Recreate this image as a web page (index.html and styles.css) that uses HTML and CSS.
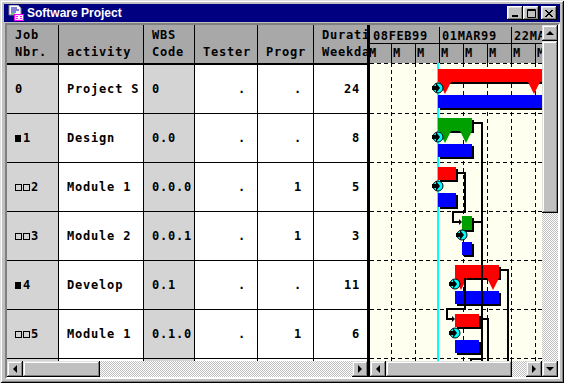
FILE: index.html
```html
<!doctype html>
<html lang="en">
<head>
  <title>Software Project</title>
  <link rel="stylesheet" href="styles.css">
</head>
<body>
  <div class="window">
    <div class="titlebar">
      <svg class="app-icon" width="16" height="16" viewBox="0 0 16 16">
        <path d="M1 0h9l3 3v7H1z" fill="#fff" stroke="#808080"/>
        <path d="M3 3h6M3 5h8M3 7h5" stroke="#0000a8"/>
        <path d="M3 9h4" stroke="#00a800"/>
        <rect x="6" y="9" width="10" height="7" fill="#ff00ff"/>
        <path d="M7.5 10.5h3v4h-3zM11.5 10.5h3v4h-3zM7 12.5h8" stroke="#fff" fill="none"/>
      </svg>
      <span class="title">Software Project</span>
      <div class="controls">
        <span class="ctl"><svg width="8" height="7" viewBox="0 0 8 7"><rect x="1" y="5" width="6" height="2" fill="#000"/></svg></span>
        <span class="ctl"><svg width="9" height="9" viewBox="0 0 9 9"><path d="M0.5 0.5h8v8h-8z M0.5 1.5h8" fill="none" stroke="#000"/></svg></span>
        <span class="ctl close"><svg width="8" height="7" viewBox="0 0 8 7"><path d="M0 0l7 7M1 0l7 7M7 0l-7 7M8 0l-7 7" stroke="#000" stroke-width="1"/></svg></span>
      </div>
    </div>

    <div class="client">
      <div class="table-pane">
        <div class="grid">
          <div class="hd">Job<br>Nbr.</div>
          <div class="hd">activity</div>
          <div class="hd">WBS<br>Code</div>
          <div class="hd">Tester</div>
          <div class="hd">Progr</div>
          <div class="hd">Durati<br>Weekda</div>

          <div class="cell key">0</div>
          <div class="cell">Project S</div>
          <div class="cell key">0</div>
          <div class="cell num">.</div>
          <div class="cell num">.</div>
          <div class="cell num dur">24</div>

          <div class="cell key"><i class="sq full"></i>1</div>
          <div class="cell">Design</div>
          <div class="cell key">0.0</div>
          <div class="cell num">.</div>
          <div class="cell num">.</div>
          <div class="cell num dur">8</div>

          <div class="cell key"><i class="sq"></i><i class="sq"></i>2</div>
          <div class="cell">Module 1</div>
          <div class="cell key">0.0.0</div>
          <div class="cell num">.</div>
          <div class="cell num">1</div>
          <div class="cell num dur">5</div>

          <div class="cell key"><i class="sq"></i><i class="sq"></i>3</div>
          <div class="cell">Module 2</div>
          <div class="cell key">0.0.1</div>
          <div class="cell num">.</div>
          <div class="cell num">1</div>
          <div class="cell num dur">3</div>

          <div class="cell key"><i class="sq full"></i>4</div>
          <div class="cell">Develop</div>
          <div class="cell key">0.1</div>
          <div class="cell num">.</div>
          <div class="cell num">.</div>
          <div class="cell num dur">11</div>

          <div class="cell key"><i class="sq"></i><i class="sq"></i>5</div>
          <div class="cell">Module 1</div>
          <div class="cell key">0.1.0</div>
          <div class="cell num">.</div>
          <div class="cell num">1</div>
          <div class="cell num dur">6</div>

          <div class="cell key"></div>
          <div class="cell"></div>
          <div class="cell key"></div>
          <div class="cell num"></div>
          <div class="cell num"></div>
          <div class="cell num dur"></div>
        </div>
        <div class="hscroll">
          <span class="btn"><i class="arr-l"></i></span>
          <span class="thumb thumb-table"></span>
          <span class="track"></span>
          <span class="btn"><i class="arr-r"></i></span>
        </div>
      </div>

      <div class="splitter"></div>

      <div class="gantt-pane">
        <div class="timescale">
          <div class="months">
            <span>08FEB99</span><span>01MAR99</span><span>22MAR99</span>
          </div>
          <div class="weeks">
            <span>M</span><span>M</span><span>M</span><span>M</span><span>M</span><span>M</span><span>M</span><span>M</span>
          </div>
        </div>
        <svg class="chart" width="172" height="298" viewBox="0 0 172 298">
          <rect width="172" height="298" fill="#fffff0"/>
          <g stroke="#000" stroke-dasharray="4 3">
            <path d="M0 0.5H172M0 50.5H172M0 99.5H172M0 148.5H172M0 197.5H172M0 246.5H172M0 295.5H172"/>
            <path d="M21.5 0V298M45.5 0V298M93.5 0V298M117.5 0V298M141.5 0V298M165.5 0V298"/>
          </g>
          <rect x="67" y="0" width="2" height="298" fill="#00ffff"/>

          <g fill="#000">
            <rect x="70" y="8" width="104" height="13"/>
            <rect x="70" y="34" width="104" height="13"/>
            <rect x="70" y="57" width="34" height="13"/>
            <rect x="70" y="83" width="34" height="13"/>
            <rect x="70" y="106" width="18" height="13"/>
            <rect x="70" y="132" width="18" height="14"/>
            <rect x="94" y="155" width="10" height="14"/>
            <rect x="94" y="181" width="10" height="13"/>
            <rect x="87" y="204" width="44" height="13"/>
            <rect x="87" y="230" width="44" height="13"/>
            <rect x="87" y="253" width="24" height="13"/>
            <rect x="87" y="279" width="24" height="13"/>
          </g>
          <g fill="#ff0000">
            <rect x="68" y="6" width="104" height="13"/>
            <rect x="68" y="104" width="18" height="13"/>
            <rect x="85" y="202" width="44" height="13"/>
            <rect x="85" y="251" width="24" height="13"/>
            <path d="M69 19h12l-6 12zM158 19h12l-6 12zM85 215h12l-6 12zM117 215h12l-6 12z"/>
          </g>
          <g fill="#00a000">
            <rect x="68" y="55" width="34" height="13"/>
            <rect x="92" y="153" width="10" height="14"/>
            <path d="M69 68h12l-6 12zM90 68h12l-6 12z"/>
          </g>
          <g fill="#0000ff">
            <rect x="68" y="32" width="104" height="13"/>
            <rect x="68" y="81" width="34" height="13"/>
            <rect x="68" y="130" width="18" height="14"/>
            <rect x="92" y="179" width="10" height="13"/>
            <rect x="85" y="228" width="44" height="13"/>
            <rect x="85" y="277" width="24" height="13"/>
          </g>

          <g fill="none" stroke="#000" stroke-width="2">
            <path d="M103 60H112V298"/>
            <path d="M86 110H95V149H83V159H90"/>
            <path d="M103 159H112"/>
            <path d="M129 207H138V298"/>
            <path d="M95 215V246H77V256H83"/>
            <path d="M109 256H118V298"/>
            <path d="M101 298V296H112"/>
          </g>
          <g fill="#000">
            <path d="M89 156l3 3-3 3z"/>
            <path d="M82 253l3 3-3 3z"/>
          </g>

          <g class="marker">
            <circle cx="68" cy="25" r="5"/><path d="M62 23h4v-3l4 5-4 5v-3h-4z"/>
            <circle cx="68" cy="74" r="5"/><path d="M62 72h4v-3l4 5-4 5v-3h-4z"/>
            <circle cx="68" cy="123" r="5"/><path d="M62 121h4v-3l4 5-4 5v-3h-4z"/>
            <circle cx="92" cy="172" r="5"/><path d="M86 170h4v-3l4 5-4 5v-3h-4z"/>
            <circle cx="85" cy="221" r="5"/><path d="M79 219h4v-3l4 5-4 5v-3h-4z"/>
            <circle cx="85" cy="270" r="5"/><path d="M79 268h4v-3l4 5-4 5v-3h-4z"/>
          </g>
        </svg>
        <div class="hscroll">
          <span class="btn"><i class="arr-l"></i></span>
          <span class="thumb thumb-gantt"></span>
          <span class="track"></span>
          <span class="btn"><i class="arr-r"></i></span>
        </div>
      </div>

      <div class="vscroll">
        <span class="btn"><i class="arr-u"></i></span>
        <span class="thumb thumb-v"></span>
        <span class="track"></span>
        <span class="btn"><i class="arr-d"></i></span>
      </div>
    </div>
  </div>
</body>
</html>
```

FILE: styles.css
```css
body {
  margin: 0;
  background: #c0c0c0;
  font-family: "DejaVu Sans Mono", "Liberation Mono", monospace;
}

.window {
  width: 564px;
  height: 383px;
  box-sizing: border-box;
  padding: 4px 4px 4px 4px;
  background: #c0c0c0;
  box-shadow: inset 1px 1px #dfdfdf, inset -1px -1px #000, inset 2px 2px #fff, inset -2px -2px #808080;
  display: flex;
  flex-direction: column;
}

/* title bar */
.titlebar {
  height: 18px;
  background: #000080;
  display: flex;
  align-items: center;
  padding: 0 3px 0 4px;
}

.app-icon {
  flex: none;
}

.title {
  flex: 1;
  margin-left: 3px;
  color: #fff;
  font: bold 12px "Liberation Sans", Arial, sans-serif;
}

.controls {
  display: flex;
}

.ctl {
  width: 16px;
  height: 14px;
  box-sizing: border-box;
  background: #c0c0c0;
  box-shadow: inset -1px -1px #000, inset 1px 1px #fff, inset -2px -2px #808080, inset 2px 2px #dfdfdf;
  display: flex;
  align-items: center;
  justify-content: center;
}

.ctl.close {
  margin-left: 2px;
}

/* client area */
.client {
  margin: 1px 0 0 1px;
  flex: 1;
  display: flex;
  border: 2px solid;
  border-color: #808080 #fff #fff #808080;
}

.table-pane {
  width: 361px;
  display: flex;
  flex-direction: column;
}

.grid {
  height: 336px;
  overflow: hidden;
  display: grid;
  grid-template-columns: 52px 85px 51px 63px 56px 54px;
  grid-template-rows: 40px;
  grid-auto-rows: 49px;
  background: #fff;
  font-size: 12px;
  font-weight: bold;
  letter-spacing: 0.8px;
}

.hd,
.cell {
  box-sizing: border-box;
  border-right: 1px solid #000;
  border-bottom: 1px solid #000;
  overflow: hidden;
  white-space: nowrap;
}

.hd {
  background: #a8a8a8;
  border-bottom-width: 2px;
  line-height: 17px;
  padding: 3px 0 0 8px;
  display: flex;
  flex-direction: column;
  justify-content: flex-end;
  padding-bottom: 2px;
}

.cell {
  display: flex;
  align-items: center;
  padding-left: 8px;
}

.cell.key {
  background: #d4d4d4;
}

.cell.num {
  justify-content: flex-end;
  padding-right: 11px;
}

.cell.dur {
  padding-right: 7px;
}

.sq {
  display: inline-block;
  width: 7px;
  height: 7px;
  box-sizing: border-box;
  border: 1px solid #000;
  margin-right: 1px;
  margin-top: 1px;
}

.sq.full {
  width: 6px;
  background: #000;
  margin-right: 2px;
}

.splitter {
  width: 2px;
  background: #000;
}

/* gantt */
.gantt-pane {
  width: 172px;
  display: flex;
  flex-direction: column;
  overflow: hidden;
}

.timescale {
  height: 38px;
  background: #a8a8a8;
  font-size: 12px;
  font-weight: bold;
  letter-spacing: 0.6px;
}

.months,
.weeks {
  display: flex;
  margin-left: -3px;
  white-space: nowrap;
}

.months {
  height: 19px;
  box-sizing: border-box;
  border-bottom: 1px solid #000;
  line-height: 18px;
  padding-top: 2px;
}

.months span {
  flex: none;
  width: 72px;
  box-sizing: border-box;
  border-left: 1px solid #000;
  padding-left: 2px;
}

.months span:first-child {
  padding-left: 5px;
}

.weeks {
  height: 19px;
  line-height: 19px;
}

.weeks span {
  flex: none;
  width: 24px;
  box-sizing: border-box;
  border-left: 1px solid #000;
  padding-left: 1px;
}

.chart {
  display: block;
}

.marker circle {
  fill: #00ffff;
  stroke: #000;
}

.marker path {
  fill: #000;
}

/* scroll bars */
.hscroll {
  height: 16px;
  display: flex;
}

.vscroll {
  width: 16px;
  display: flex;
  flex-direction: column;
}

.btn,
.thumb {
  flex: none;
  box-sizing: border-box;
  background: #c0c0c0;
  box-shadow: inset -1px -1px #000, inset 1px 1px #dfdfdf, inset -2px -2px #808080, inset 2px 2px #fff;
}

.btn {
  width: 16px;
  height: 16px;
  display: flex;
  align-items: center;
  justify-content: center;
}

.track {
  flex: 1;
  background: repeating-conic-gradient(#c0c0c0 0 25%, #fff 0 50%) 0 0 / 2px 2px;
}

.thumb-table {
  width: 77px;
}

.thumb-gantt {
  width: 126px;
}

.thumb-v {
  height: 172px;
}

.arr-l,
.arr-r,
.arr-u,
.arr-d {
  width: 0;
  height: 0;
  border: 4px solid transparent;
}

.arr-l {
  border-left: 0;
  border-right-color: #000;
}

.arr-r {
  border-right: 0;
  border-left-color: #000;
}

.arr-u {
  border-top: 0;
  border-bottom-color: #000;
}

.arr-d {
  border-bottom: 0;
  border-top-color: #000;
}
```
